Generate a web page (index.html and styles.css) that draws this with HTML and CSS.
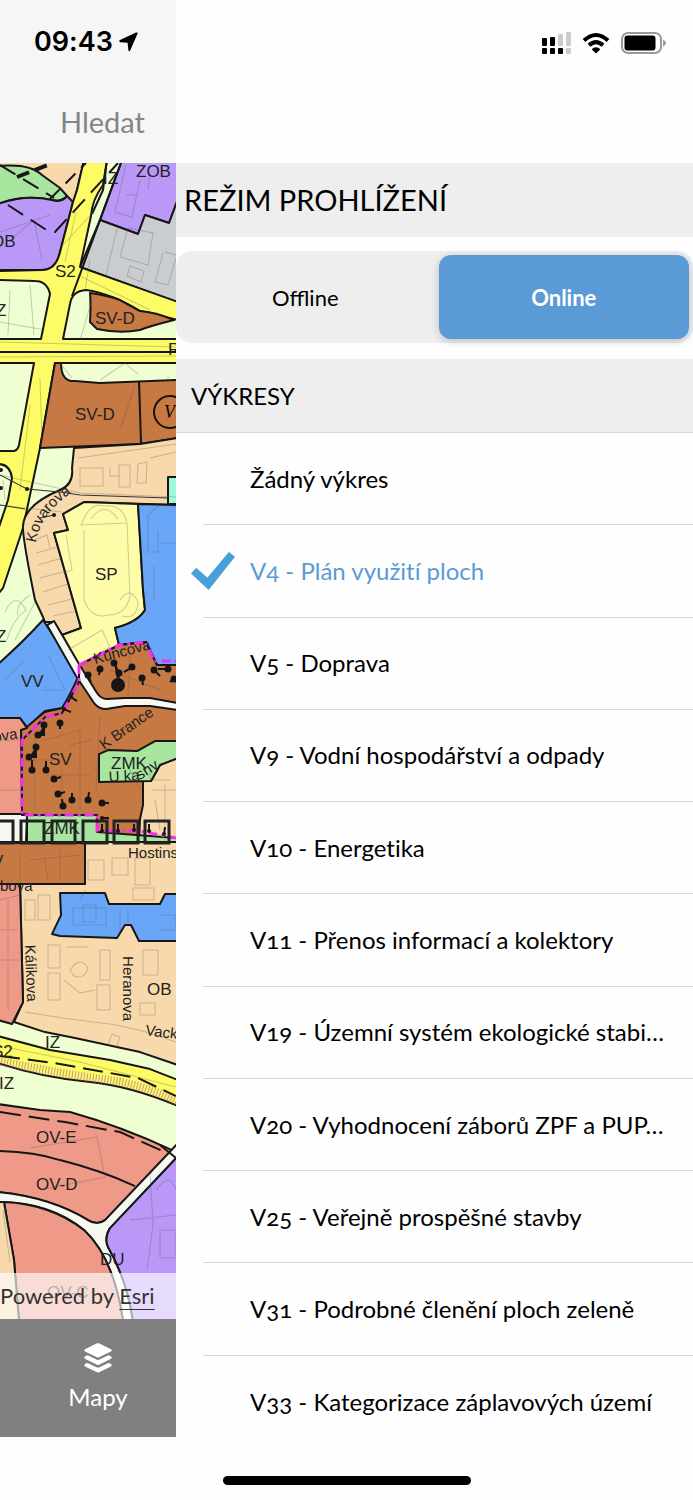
FILE: index.html
```html
<!DOCTYPE html>
<html lang="cs">
<head>
    <meta charset="UTF-8">
    <meta name="viewport" content="width=device-width, initial-scale=1.0">
    <title>Mapy</title>
    <link rel="stylesheet" href="styles.css">
</head>
<body>
    <div class="screen">
        <main class="map-pane">
            <header class="map-header">
                <div class="clock">
                    <span>09:43</span>
                    <svg width="19" height="20" viewBox="0 0 19 20" aria-hidden="true">
                        <path d="M18.6 1.6 11.2 18.4Q10.2 20.2 9.4 18.2L8.6 10.8 1.4 10.2Q-.8 9.4 1 8L17 .6Q19 0 18.6 1.6Z"/>
                    </svg>
                </div>
                <input class="search" type="search" placeholder="Hledat" aria-label="Hledat">
            </header>

            <div class="map">
                <svg class="map-drawing" viewBox="0 163 176 1156" preserveAspectRatio="xMinYMin slice">
                    <rect class="green-light" x="0" y="163" width="176" height="1156"/>

                    <!-- land use areas, north -->
                    <g class="area">
                        <path class="sand" d="M-2 160H84L77 190 73 203-2 204Z"/>
                        <path class="green" d="M-2 166Q30 163 42 175L60 188 67 196Q62 202 52 200 25 194-2 204Z"/>
                        <path class="purple" d="M-2 204Q25 194 52 200 62 203 67 196L73 202 60 252Q56 270 42 270H-2Z"/>
                        <path class="purple" d="M122 160H178V199L169 223 145 215 138 234 100 220Z"/>
                        <path class="gray" d="M100 220 138 234 145 215 169 223 178 199V303L80 267Z"/>
                        <path class="yellow" d="M84 160H107L103 185Q92 200 91 216L80 267 178 302V320L140 311Q110 293 86 290 72 291 70 304L63 339H178V363H55L40 448 23 528 3 588-2 594V530L8 500 12 478Q10 464-2 464V451L14 451Q18 450 19 445L34 363H-2V339H41L50 294Q47 281 35 281L-2 280V271L42 270Q56 270 60 252L73 202 77 190Z"/>
                        <path d="M122 160 72 296 M107 160 103 190 92 214" fill="none"/>
                        <path class="brown" d="M90 293Q110 296 120 300L140 311Q155 312 174 320 150 326 140 330 120 334 97 329L90 322Q91 305 90 293Z"/>
                        <path class="brown" d="M55 363H61Q61 382 75 381L100 383 178 380V438L140 444 40 448Z"/>
                        <path d="M139 381 141 443M0 352H176" fill="none"/>
                        <path class="sand" d="M74 448 140 444 178 438V505L84 502 63 514 68 530 54 533 81 628 62 635 54 622 45 622 43 617 35 600Q22 535 23 526 24 505 60 490 74 484 72 468Z"/>
                        <path class="mint" d="M168 477H178V504H168Z"/>
                        <path class="yellow-pale" d="M84 502 138 504 143 590 145 610Q138 622 115 628L119 645 79 665 62 635 81 628 54 533 68 530 63 514Z"/>
                        <path class="blue" d="M138 504 178 505V666H157L150 655 146 642 119 645 115 628Q138 622 145 610L143 590Z"/>
                    </g>

                    <!-- land use areas, centre -->
                    <g class="area">
                        <path class="brown" d="M79 665 119 645 146 642 157 665H178V841H97V815H22L21 730 45 712 62 708 79 675Z"/>
                        <path class="blue" d="M43 620 79 675Q70 695 62 708L45 711 27 727 20 718H-2V664Q20 645 43 620Z"/>
                        <path class="road" d="M47 625 54 621 79 664 97 693Q101 699 107 699L125 698 150 698 178 703V710L150 706 125 706 106 709Q99 709 94 703L76 676Z"/>
                        <path class="pink" d="M-2 718H20L27 728 21 730 22 814H-2Z"/>
                        <path class="sand" d="M178 757 160 765 151 781H143V805L140 819 139 842H85V884H20L23 1002 14 1022 45 1032 75 1038 140 1052 178 1065Z"/>
                        <path class="green" d="M99 754 108 750 137 751 155 741H178V758L160 765 151 781 99 782Z"/>
                        <path class="green" d="M27 815H97V832L178 838V842H27Z"/>
                        <path class="road" d="M-2 814H27L26 842H-2Z"/>
                        <path class="brown" d="M-2 843H85V884H-2Z"/>
                        <path class="pink" d="M-2 884H20L23 1002 12 1024-2 1020Z"/>
                        <path class="blue" d="M60 893H105L109 904H160L165 894H178V941H139L131 925H125L117 938 60 936 52 934 61 915Z"/>
                    </g>

                    <!-- land use areas, south -->
                    <g class="area">
                        <path class="yellow" d="M-2 1036 50 1050 110 1060 150 1069 178 1080V1106Q130 1086 90 1082 40 1077-2 1063Z"/>
                        <path class="pink" d="M-2 1104 40 1110 70 1112Q120 1126 172 1150L105 1220Q97 1226 88 1220 50 1197-2 1192Z"/>
                        <path class="road" d="M178 1143 105 1220Q97 1226 88 1220 50 1197-2 1192V1202Q50 1202 84 1230 114 1258 123 1321H133Q127 1280 108 1247 104 1238 110 1228L178 1156Z"/>
                        <path class="pink" d="M4 1202Q50 1204 84 1230 114 1258 123 1321H19L14 1260Z"/>
                        <path class="sand" d="M-2 1202H4L14 1260 19 1321H-2Z"/>
                        <path class="purple" d="M178 1156 110 1228Q104 1238 108 1247 127 1280 133 1321H178Z"/>
                        <path d="M0 1151Q35 1152 60 1160 100 1170 135 1186M160 1145 176 1158" fill="none"/>
                    </g>

                    <!-- parcels and buildings -->
                    <g class="parcels">
                        <path d="M10 240 34 220 42 260M0 232 50 215M76 212 65 262M63 245 95 210M126 165 115 212 132 217 140 180M126 195H138M150 175 148 190M106 275 118 225M128 228 120 257 148 265 153 233 128 228M165 252 176 255M163 253 155 282 168 285 176 258M130 266 144 271 141 282 127 276ZM78 275 150 310M0 322 45 330M92 300 80 340M0 342 176 347M0 357 176 356M60 363 72 378M100 380 125 363 138 374M120 430 135 385"/>
                        <path d="M80 468H103V486H80ZM110 467 110 476 120 476M119 465H130V487H119ZM138 464 147 462 146 483 137 483ZM150 458 176 452M78 458 176 444M0 475 80 493 176 497M0 505 62 512M40 378 42 440M30 405 20 490M81 525Q90 501 104 506 122 503 127 523ZM84 530V600Q92 620 108 615 126 615 130 596L127 523M91 519Q104 500 118 519M35 540 47 535 50 548M36 553 58 547M38 565 62 558M40 578 66 571M43 592 68 584M48 605 72 599M53 616 76 611M66 535 72 570 63 573M148 515 158 506H176M148 514V552H158V530M160 543H176M154 566V600"/>
                        <path d="M5 612Q15 590 26 610 12 620 7 640M15 640 36 600M68 650 102 630 110 647 82 663M120 600Q130 585 138 602 137 620 122 616M5 680 25 660M48 655 65 690M42 690 62 690M0 740H20M0 790H20M35 735V810M45 740 80 730V810M100 715 96 790M50 775H90M125 760 140 790M150 770V780H170M152 790H176M155 800 160 830M165 785V830M30 860 80 855M20 850V880M60 850V880M0 900 20 895M0 930H18M0 960H20M8 900V1010"/>
                        <path d="M88 860H104V880H88ZM112 858H128V875H112ZM135 858H150V885H135ZM133 888H154V900H133ZM25 900H35V920H25ZM38 895H50V920H38ZM73 908H106V925H73ZM83 905H96V922H83ZM26 950H38M48 945H60V968H48ZM66 947H88M48 973H60V1000H48ZM100 950H110V980H100ZM97 985H110V1010H97ZM143 950H158V975H143ZM140 1003H155V1015H140ZM70 970Q80 955 88 968 84 980 74 976ZM64 980 80 993 95 990M25 1012Q60 1018 110 1024 145 1030 176 1042M108 1045 112 1034 120 1037 116 1048M0 1046 80 1062 176 1087M30 1148 97 1137 105 1177 40 1190M150 1170 153 1225 147 1270M130 1220 176 1215M160 1230H176V1258H160ZM156 1190Q170 1170 176 1190M3 1210 10 1262"/>
                        <path d="M3 480 5 500M30 595Q15 605 18 615M120 735 135 718M22 760H55M62 770V810M70 745 92 740M110 670 160 690M130 655 128 695M45 860 48 880M168 375V385M90 260 85 290M30 285 34 335M10 290 8 335M80 900 85 890M160 915H176V930H160M120 910V935M128 910V922"/>
                    </g>
                    <path class="track" d="M0 475 27 489 60 492 80 495 168 498M0 505 25 509M40 518 54 515"/>

                    <!-- planned routes -->
                    <g class="dashes">
                        <path d="M0 165 54 198M8 205 48 231 55 232 118 163" stroke-dasharray="18 9"/>
                        <path d="M50 199 86 163" stroke-dasharray="14 8"/>
                        <path d="M17 177 50 164" stroke-width="4" stroke-dasharray="13 6"/>
                        <path d="M0 1056 55 1063 138 1078 176 1096" stroke-dasharray="20 8"/>
                        <path d="M0 1112 65 1122 120 1132 165 1152" stroke-dasharray="21 8"/>
                    </g>
                    <path class="noise-strip" d="M-2 1061Q60 1074 120 1082 150 1088 178 1102"/>
                    <path class="boundary-dark" d="M79 665 119 645 146 642 157 665H176M79 665V682L62 713 45 717 22 740V815H97V831"/>
                    <path class="boundary" d="M79 665 119 645 146 642 154 661H176M79 665V682L62 713 45 717 22 740V815H97V831L140 831 176 838"/>

                    <!-- tram squares -->
                    <g class="squares">
                        <path d="M-10 821H13V843H-10ZM21 821H44V843H21ZM52 821H75V843H52ZM83 821H107V843H83ZM114 821H138V843H114ZM145 821H169V843H145Z"/>
                    </g>

                    <!-- trees -->
                    <g class="trees">
                        <circle cx="118" cy="685" r="6"/>
                        <path d="M88 675 91 682M100 669 99 675M114 663 119 673 118 685M132 667 124 672M142 678 143 685M154 670 160 676M168 669H158M176 677 170 682M71 697 77 701M64 709 71 712M60 723V729M44 725V735H38M36 747V757H29M32 770V760M46 770V761M54 779 61 777M58 794 65 792M72 800V793M88 800 89 792M63 806 62 799M102 803H109M102 818H109M102 831V824M118 831V824M134 830V824M149 831V824M164 834 165 827"/>
                        <path class="crowns" d="M88 675h0M100 669h0M114 663h0M119 673h0M132 667h0M142 678h0M154 670h0M168 669h0M174 679h0M60 723h0M44 725h0M38 735h0M36 747h0M29 757h0M32 770h0M46 770h0M54 779h0M58 794h0M72 800h0M88 800h0M63 806h0M102 803h0"/>
                        <path class="posts" d="M71 697h0M64 709h0M102 818h0M102 831h0M118 831h0M134 830h0M149 831h0M164 834h0M27 489h0M54 515h0M1 470h0M1 488h0"/>
                    </g>

                    <!-- labels -->
                    <circle class="ring" cx="170" cy="412" r="16"/>
                    <text class="ring-label" x="164" y="418">V</text>
                    <g class="labels">
                        <text x="136" y="177">ZOB</text>
                        <text x="103" y="184">IZ</text>
                        <text x="-9" y="247">OB</text>
                        <text x="55" y="277">S2</text>
                        <text x="-4" y="316">Z</text>
                        <text x="95" y="324">SV-D</text>
                        <text x="168" y="355">R</text>
                        <text x="75" y="420">SV-D</text>
                        <text x="95" y="580">SP</text>
                        <text x="-4" y="642">Z</text>
                        <text x="21" y="687">VV</text>
                        <text x="49" y="765">SV</text>
                        <text x="111" y="769">ZMK</text>
                        <text x="44" y="834">ZMK</text>
                        <text x="-8" y="867">V</text>
                        <text x="147" y="995">OB</text>
                        <text x="-8" y="1057">S2</text>
                        <text x="45" y="1048">IZ</text>
                        <text x="-1" y="1089">IZ</text>
                        <text x="36" y="1143">OV-E</text>
                        <text x="36" y="1190">OV-D</text>
                        <text x="100" y="1265">DU</text>
                        <text x="47" y="1298">OV-C</text>
                    </g>
                    <g class="streets">
                        <path id="kovarova" d="M36 543Q40 512 76 490" fill="none"/>
                        <path id="ukasny" d="M109 782 140 780 168 762" fill="none"/>
                        <text><textPath href="#kovarova">Kovarova</textPath></text>
                        <text><textPath href="#ukasny">U kasny</textPath></text>
                        <text transform="translate(95 664) rotate(-15)">Kuncova</text>
                        <text transform="translate(104 750) rotate(-35)">K Brance</text>
                        <text transform="translate(-6 742) rotate(-8)">ova</text>
                        <text x="128" y="858">Hostins</text>
                        <text x="0" y="891">bova</text>
                        <text transform="translate(25 945) rotate(88)">Kálikova</text>
                        <text transform="translate(123 956) rotate(90)">Heranova</text>
                        <text transform="translate(145 1035) rotate(7)">Vack</text>
                    </g>
                </svg>
                <p class="attribution">Powered by <a href="#">Esri</a></p>
            </div>

            <nav class="tab-bar">
                <a class="tab" href="#">
                    <svg width="28" height="30" viewBox="0 0 28 30" aria-hidden="true">
                        <path d="M13 .3Q14 0 15 .3L27 6.2Q28.5 7.3 27 8.4L15 14.3Q14 14.8 13 14.3L1 8.4Q-.5 7.3 1 6.2Z"/>
                        <path d="M1.2 13.2 3.6 12.3 13 16.8Q14 17.2 15 16.8L24.4 12.3 26.8 13.2Q28.4 14.6 27 15.8L15 21.7Q14 22.2 13 21.7L1 15.8Q-.4 14.6 1.2 13.2Z"/>
                        <path d="M1.2 20.8 3.6 19.9 13 24.4Q14 24.8 15 24.4L24.4 19.9 26.8 20.8Q28.4 22.2 27 23.4L15 29.3Q14 29.8 13 29.3L1 23.4Q-.4 22.2 1.2 20.8Z"/>
                    </svg>
                    <span>Mapy</span>
                </a>
            </nav>
        </main>

        <aside class="drawer">
            <div class="status-icons">
                <svg width="29" height="22" viewBox="0 0 29 22" aria-hidden="true">
                    <rect x="0" y="6" width="5" height="8" rx="1"/>
                    <rect x="8" y="5" width="5" height="9" rx="1"/>
                    <rect x="16" y="2" width="5" height="12" rx="1" fill="#ccc"/>
                    <rect x="24" y="0" width="5" height="14" rx="1" fill="#ccc"/>
                    <rect x="0" y="16" width="5" height="6" rx="1"/>
                    <rect x="8" y="16" width="5" height="6" rx="1"/>
                    <rect x="16" y="16" width="5" height="6" rx="1"/>
                    <rect x="24" y="16" width="5" height="6" rx="1" fill="#ccc"/>
                </svg>
                <svg width="28" height="22" viewBox="0 0 28 22" aria-hidden="true">
                    <path d="M2 8.5Q14-2.5 26 8.5M7 13.3Q14 7 21 13.3" fill="none" stroke="#000" stroke-width="4"/>
                    <path d="M9.6 17.2Q14 13.4 18.4 17.2L14 21.5Z"/>
                </svg>
                <svg width="45" height="22" viewBox="0 0 45 22" aria-hidden="true">
                    <rect x="1" y="1" width="39" height="20" rx="6" fill="none" stroke="#999" stroke-width="2"/>
                    <rect x="3.5" y="3.5" width="31" height="15" rx="3"/>
                    <path d="M42 7.5Q45 9 45 11 45 13 42 14.5Z" fill="#999"/>
                </svg>
            </div>

            <h1 class="drawer-title">REŽIM PROHLÍŽENÍ</h1>
            <div class="mode-switch">
                <button type="button" class="mode" aria-pressed="false">Offline</button>
                <button type="button" class="mode mode-active" aria-pressed="true">Online</button>
            </div>

            <h2 class="list-title">VÝKRESY</h2>
            <ul class="drawings">
                <li><label class="drawing"><input type="radio" name="drawing"><span>Žádný výkres</span></label></li>
                <li><label class="drawing"><input type="radio" name="drawing" checked><span>V4 - Plán využití ploch</span></label></li>
                <li><label class="drawing"><input type="radio" name="drawing"><span>V5 - Doprava</span></label></li>
                <li><label class="drawing"><input type="radio" name="drawing"><span>V9 - Vodní hospodářství a odpady</span></label></li>
                <li><label class="drawing"><input type="radio" name="drawing"><span>V10 - Energetika</span></label></li>
                <li><label class="drawing"><input type="radio" name="drawing"><span>V11 - Přenos informací a kolektory</span></label></li>
                <li><label class="drawing"><input type="radio" name="drawing"><span>V19 - Územní systém ekologické stabi…</span></label></li>
                <li><label class="drawing"><input type="radio" name="drawing"><span>V20 - Vyhodnocení záborů ZPF a PUP…</span></label></li>
                <li><label class="drawing"><input type="radio" name="drawing"><span>V25 - Veřejně prospěšné stavby</span></label></li>
                <li><label class="drawing"><input type="radio" name="drawing"><span>V31 - Podrobné členění ploch zeleně</span></label></li>
                <li><label class="drawing"><input type="radio" name="drawing"><span>V33 - Kategorizace záplavových území</span></label></li>
            </ul>
        </aside>

        <div class="home-indicator"></div>
    </div>
</body>
</html>
```
FILE: styles.css
```css
* {
    box-sizing: border-box;
}
body {
    margin: 0;
    font-family: Lato, sans-serif;
    font-size: 24px;
    line-height: 32px;
    font-variant-ligatures: none;
    font-variant-numeric: oldstyle-nums;
    color: #000;
    background-color: #fefefe;
}
.screen {
    position: relative;
    display: grid;
    grid-template-columns: 25.4% 1fr;
    min-height: 100vh;
}

/* map side */
.map-pane {
    display: flex;
    flex-direction: column;
    min-width: 0;
    padding-bottom: 63px;
}
.map-header {
    display: flex;
    flex-direction: column;
    gap: 44px;
    height: 163px;
    padding-top: 26px;
    background-color: #f6f6f6;
}
.clock {
    display: flex;
    align-items: center;
    gap: 6px;
    padding-left: 34px;
    font-family: Inter, sans-serif;
    font-size: 27px;
    font-weight: 600;
    font-variant-numeric: normal;
}
.search {
    width: 100%;
    padding: 0 0 0 60px;
    border: none;
    background: none;
    font-family: inherit;
    font-size: 29px;
    line-height: 40px;
    appearance: none;
}
.search::placeholder {
    color: #858585;
}
.map {
    position: relative;
    flex: 1;
    min-height: 400px;
    overflow: hidden;
}
.map-drawing {
    position: absolute;
    width: 100%;
    height: 100%;
}
.area path {
    stroke: #161616;
    stroke-width: 2;
    stroke-linejoin: round;
}
.green-light { fill: #f0ffd2; }
.sand { fill: #f8d9ab; }
.green { fill: #a8e59e; }
.purple { fill: #b998f8; }
.gray { fill: #cacdd0; }
.yellow { fill: #fdfc67; }
.yellow-pale { fill: #fefca8; }
.brown { fill: #c77943; }
.mint { fill: #9ff8d8; }
.blue { fill: #6aa6f8; }
.road { fill: #f8f8f2; }
.pink { fill: #ef9a89; }
.parcels {
    fill: none;
    stroke: #555;
    stroke-opacity: 0.3;
}
.track {
    fill: none;
    stroke: #333;
}
.dashes {
    fill: none;
    stroke: #161616;
    stroke-width: 2;
}
.noise-strip {
    fill: none;
    stroke: #a050a0;
    stroke-width: 9;
    stroke-opacity: 0.6;
    stroke-dasharray: 1 2;
}
.boundary, .boundary-dark {
    fill: none;
    stroke: #f52df5;
    stroke-width: 3;
    stroke-dasharray: 9 4 3 4;
}
.boundary-dark {
    stroke: #161616;
    stroke-dasharray: none;
    stroke-width: 2;
}
.squares {
    fill: none;
    stroke: #222;
    stroke-width: 3;
}
.trees {
    fill: #161616;
    stroke: #161616;
    stroke-width: 2;
}
.crowns {
    stroke-width: 7;
    stroke-linecap: round;
}
.posts {
    stroke-width: 4;
    stroke-linecap: round;
}
.ring {
    fill: none;
    stroke: #161616;
    stroke-width: 2;
}
.ring-label {
    font-family: "Liberation Serif", serif;
    font-size: 18px;
    font-style: italic;
}
.labels, .streets {
    fill: #222;
    font-family: "Liberation Sans", sans-serif;
    font-size: 17px;
}
.streets {
    font-size: 15px;
}
.attribution {
    position: absolute;
    right: 0;
    bottom: 0;
    left: 0;
    margin: 0;
    padding: 7px 0;
    background-color: rgba(255, 255, 255, 0.65);
    color: #333;
    font-size: 22px;
    white-space: nowrap;
}
.attribution a {
    color: inherit;
    text-underline-offset: 5px;
    text-decoration-thickness: 1px;
}
.tab-bar {
    height: 118px;
    padding: 24px 0 0 20px;
    background-color: #808080;
}
.tab {
    display: flex;
    flex-direction: column;
    align-items: center;
    gap: 8px;
    color: #fff;
    text-decoration: none;
}
.tab svg {
    fill: #fff;
}

/* drawer */
.drawer {
    display: flex;
    flex-direction: column;
    min-width: 0;
    padding-bottom: 52px;
}
.status-icons {
    display: flex;
    justify-content: flex-end;
    gap: 11px;
    height: 163px;
    padding: 32px 27px 0 0;
}
.drawer-title, .list-title {
    margin: 0;
    padding: 0 8px;
    background-color: #eee;
    font-size: 29px;
    font-weight: 400;
    line-height: 74px;
}
.list-title {
    padding: 0 15px;
    border-bottom: 1px solid #d6d6d6;
    font-size: 24px;
    line-height: 73px;
}
.mode-switch {
    display: grid;
    grid-template-columns: 1fr 1fr;
    gap: 8px;
    height: 92px;
    margin: 14px 0 16px;
    padding: 4px;
    border-radius: 16px;
    background-color: #eee;
}
.mode {
    padding: 0;
    border: none;
    border-radius: 12px;
    background: none;
    color: inherit;
    font-family: inherit;
    font-size: 22px;
    cursor: pointer;
}
.mode-active {
    background-color: #5a9ad7;
    box-shadow: 0 2px 8px rgba(0, 0, 0, 0.2);
    color: #fff;
    font-weight: 700;
}
.drawings {
    display: grid;
    flex: 1;
    grid-auto-rows: 1fr;
    margin: 0;
    padding: 0 0 0 27px;
    list-style: none;
}
.drawings li {
    min-width: 0;
    border-bottom: 1px solid #d6d6d6;
}
.drawings li:last-child {
    border-bottom: none;
}
.drawing {
    display: flex;
    align-items: center;
    gap: 15px;
    height: 100%;
    min-height: 72px;
    cursor: pointer;
}
.drawing input {
    flex: none;
    width: 44px;
    height: 38px;
    margin: 0 0 0 -12px;
    appearance: none;
    clip-path: polygon(0 57%, 12% 42%, 37% 68%, 86% 0, 100% 13%, 40% 100%);
}
.drawing input:checked {
    background-color: #489fda;
}
.drawing input:checked + span {
    color: #5a9ad7;
}
.drawing span {
    overflow: hidden;
    text-overflow: ellipsis;
    white-space: nowrap;
}
.home-indicator {
    position: absolute;
    bottom: 15px;
    left: 50%;
    width: 248px;
    height: 9px;
    border-radius: 5px;
    background-color: #000;
    transform: translateX(-50%);
}
```
